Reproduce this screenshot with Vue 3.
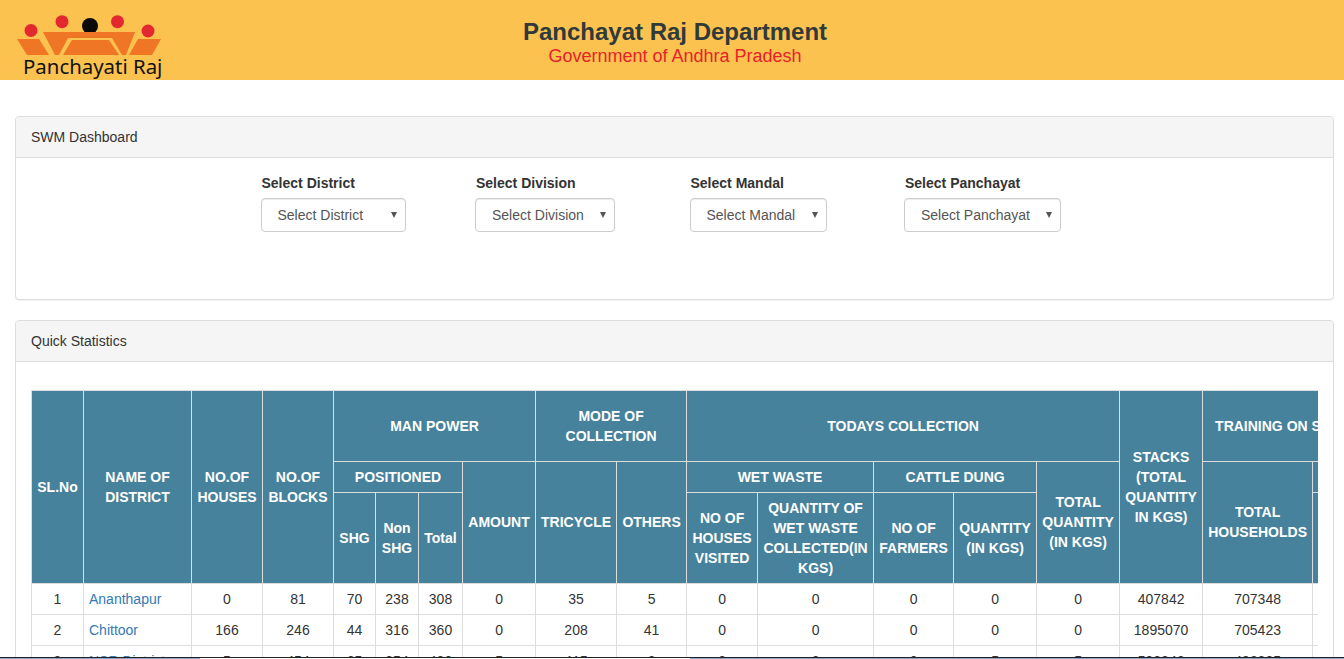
<template>
  <div class="page">
    <header class="topbar">
      <svg class="logo" viewBox="16 0 150 80" width="150" height="80">
        <circle cx="31" cy="30.5" r="6.5" fill="#e4282f" />
        <circle cx="62" cy="21.7" r="6.5" fill="#e4282f" />
        <circle cx="90" cy="26" r="8" fill="#0a0a0a" />
        <circle cx="117.5" cy="21.7" r="6.5" fill="#e4282f" />
        <circle cx="148" cy="31" r="6.5" fill="#e4282f" />
        <path d="M17 39h22l10 16H27z" fill="#ee7624" />
        <path d="M43 32h92l-9 23h-4l-10-17H68l-9 17h-4z" fill="#ee7624" />
        <path d="M72 40h37l10 15H63z" fill="#ee7624" />
        <path d="M138 39h23l-9 16h-23z" fill="#ee7624" />
        <text x="23" y="74" class="logo-text">Panchayati Raj</text>
      </svg>
      <div class="titles">
        <h1>Panchayat Raj Department</h1>
        <p>Government of Andhra Pradesh</p>
      </div>
    </header>

    <main class="content">
      <section class="panel">
        <div class="panel-heading">SWM Dashboard</div>
        <div class="filters">
          <div v-for="f in filters" :key="f.label" class="filter">
            <label>{{ f.label }}</label>
            <div class="select" :class="f.cls">
              <span>{{ f.label }}</span>
              <i class="caret"></i>
            </div>
          </div>
        </div>
      </section>

      <section class="panel">
        <div class="panel-heading">Quick Statistics</div>
        <div class="stats-body">
          <div class="table-wrap">
            <table>
              <colgroup>
                <col v-for="n in 18" :key="n" :class="'c' + n" />
              </colgroup>
              <thead>
                <tr class="h1">
                  <th rowspan="3">SL.No</th>
                  <th rowspan="3">NAME OF DISTRICT</th>
                  <th rowspan="3">NO.OF HOUSES</th>
                  <th rowspan="3">NO.OF BLOCKS</th>
                  <th colspan="4">MAN POWER</th>
                  <th colspan="2">MODE OF COLLECTION</th>
                  <th colspan="5">TODAYS COLLECTION</th>
                  <th rowspan="3">STACKS (TOTAL QUANTITY IN KGS)</th>
                  <th colspan="2" class="training">TRAINING ON SWM</th>
                </tr>
                <tr class="h2">
                  <th colspan="3">POSITIONED</th>
                  <th rowspan="2">AMOUNT</th>
                  <th rowspan="2">TRICYCLE</th>
                  <th rowspan="2">OTHERS</th>
                  <th colspan="2">WET WASTE</th>
                  <th colspan="2">CATTLE DUNG</th>
                  <th rowspan="2">TOTAL QUANTITY (IN KGS)</th>
                  <th rowspan="2">TOTAL HOUSEHOLDS</th>
                  <th></th>
                </tr>
                <tr class="h3">
                  <th>SHG</th>
                  <th>Non SHG</th>
                  <th>Total</th>
                  <th>NO OF HOUSES VISITED</th>
                  <th>QUANTITY OF WET WASTE COLLECTED(IN KGS)</th>
                  <th>NO OF FARMERS</th>
                  <th>QUANTITY (IN KGS)</th>
                  <th></th>
                </tr>
              </thead>
              <tbody>
                <tr v-for="row in rows" :key="row.id">
                  <td>{{ row.id }}</td>
                  <td class="name"><a href="#">{{ row.name }}</a></td>
                  <td v-for="(v, i) in row.vals" :key="i">{{ v }}</td>
                  <td></td>
                </tr>
              </tbody>
            </table>
          </div>
        </div>
      </section>
    </main>
    <div class="bottom-line"></div>
  </div>
</template>

<script setup>
const filters = [
  { label: 'Select District', cls: 'w-district' },
  { label: 'Select Division', cls: 'w-division' },
  { label: 'Select Mandal', cls: 'w-mandal' },
  { label: 'Select Panchayat', cls: 'w-panchayat' }
]

const rows = [
  { id: 1, name: 'Ananthapur', vals: [0, 81, 70, 238, 308, 0, 35, 5, 0, 0, 0, 0, 0, 407842, 707348] },
  { id: 2, name: 'Chittoor', vals: [166, 246, 44, 316, 360, 0, 208, 41, 0, 0, 0, 0, 0, 1895070, 705423] },
  { id: 3, name: 'NSR District', vals: [5, 454, 65, 354, 420, 5, 415, 3, 0, 0, 0, 5, 5, 592846, 496385] }
]
</script>

<style>
html, body {
  margin: 0;
  height: 659px;
  overflow: hidden;
  background: #fff;
}
</style>

<style scoped>
.page {
  position: relative;
  height: 659px;
  overflow: hidden;
  font-family: "Liberation Sans", Arial, sans-serif;
  font-size: 14px;
  line-height: 20px;
  color: #333;
}

.topbar {
  display: flex;
  height: 80px;
  background: #fbc24f;
  padding-left: 16px;
}

.logo {
  flex: none;
}

.logo-text {
  font-family: "Noto Sans", sans-serif;
  font-size: 20.4px;
  fill: #111;
}

.titles {
  flex: 1;
  text-align: center;
  padding: 16px 170px 0 10px;
}

.titles h1 {
  margin: 0;
  font-size: 24px;
  line-height: 32px;
  font-weight: bold;
  color: #313a3a;
}

.titles p {
  margin: 0;
  font-size: 18px;
  line-height: 16px;
  color: #e5232a;
}

.content {
  padding: 36px 10px 0 15px;
}

.panel {
  border: 1px solid #ddd;
  border-radius: 4px;
  margin-bottom: 20px;
  background: #fff;
  box-shadow: 0 1px 1px rgba(0, 0, 0, .05);
}

.panel-heading {
  height: 20px;
  padding: 10px 15px;
  background: #f5f5f5;
  border-bottom: 1px solid #ddd;
  border-radius: 3px 3px 0 0;
}

.filters {
  display: grid;
  grid-template-columns: repeat(4, 214.5px);
  height: 141px;
  padding-left: 244.5px;
  box-sizing: border-box;
  padding-top: 15px;
}

.filter label {
  display: block;
  font-weight: bold;
  margin-bottom: 5px;
  padding-left: 1px;
}

.select {
  display: flex;
  align-items: center;
  justify-content: space-between;
  box-sizing: border-box;
  height: 34px;
  padding: 0 8px 0 16px;
  border: 1px solid #ccc;
  border-radius: 4px;
  color: #555;
  box-shadow: inset 0 1px 1px rgba(0, 0, 0, .075);
}

.w-district { width: 145px; }
.w-division { width: 140px; }
.w-mandal { width: 137px; }
.w-panchayat { width: 157px; }

.caret {
  width: 0;
  height: 0;
  border-left: 3.5px solid transparent;
  border-right: 3.5px solid transparent;
  border-top: 6px solid #555;
}

.stats-body {
  padding: 28px 15px 15px;
}

.table-wrap {
  overflow: hidden;
}

table {
  table-layout: fixed;
  border-collapse: collapse;
  width: 1400px;
}

.c1 { width: 52px; }
.c2 { width: 108px; }
.c3 { width: 71px; }
.c4 { width: 71px; }
.c5 { width: 42px; }
.c6 { width: 43px; }
.c7 { width: 44px; }
.c8 { width: 73px; }
.c9 { width: 81px; }
.c10 { width: 70px; }
.c11 { width: 71px; }
.c12 { width: 116px; }
.c13 { width: 80px; }
.c14 { width: 83px; }
.c15 { width: 83px; }
.c16 { width: 83px; }
.c17 { width: 110px; }
.c18 { width: 119px; }

th {
  background: #46829b;
  color: #fff;
  font-weight: bold;
  text-align: center;
  vertical-align: middle;
  border: 1px solid #ddd;
  padding: 0 2px;
}

th[rowspan="2"] {
  padding-bottom: 2px;
}

.training {
  white-space: nowrap;
  overflow: hidden;
  text-align: left;
  padding-left: 12px;
}

.h1 th { height: 70px; }
.h2 th { height: 30px; }
.h3 th { height: 90px; }

td {
  height: 30px;
  padding: 0 5px;
  text-align: center;
  border: 1px solid #ddd;
}

td.name {
  text-align: left;
}

a {
  color: #337ab7;
  text-decoration: none;
}

/* dark edge of the screenshot along the bottom */
.bottom-line {
  position: absolute;
  left: 0;
  right: 0;
  bottom: 0;
  height: 1px;
  border-top: 1px solid #222;
  background: linear-gradient(to right, #8fa6cc 200px, #fff 200px, #fff 690px, #8fa6cc 690px);
}
</style>
